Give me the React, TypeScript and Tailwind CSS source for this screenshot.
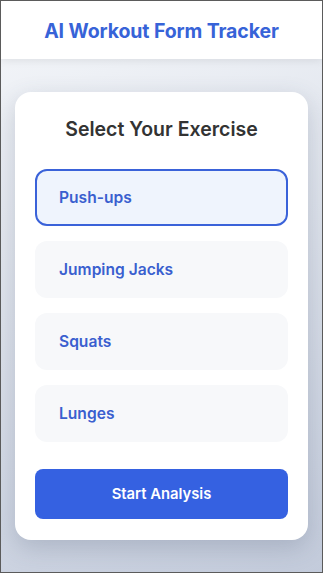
import React, { useState } from "react";

const exercises = ["Push-ups", "Jumping Jacks", "Squats", "Lunges"];

export default function App() {
  const [selected, setSelected] = useState("Push-ups");
  return (
    <div
      className="flex h-[573px] w-full flex-col overflow-hidden border border-[#5b5b5b] bg-[linear-gradient(160deg,#f5f7fa_0%,#c3cbdb_100%)]"
      style={{ fontFamily: "Inter, 'Noto Sans', sans-serif" }}
    >
      <header className="flex h-[58px] shrink-0 items-center justify-center bg-white pt-[4px] shadow-[0_2px_8px_rgba(0,0,0,0.08)]">
        <h1 className="text-[19.5px] font-bold tracking-[-0.1px] text-[#3763d8]">AI Workout Form Tracker</h1>
      </header>
      <main className="flex flex-1 flex-col px-[14px] pt-[33px] pb-[33px]">
        <div className="flex flex-col rounded-[16px] bg-white px-[20px] pt-[23px] pb-[21px] shadow-[0_8px_24px_rgba(60,72,100,0.22)]">
          <h2 className="mb-[26px] text-center text-[19.5px] leading-[28px] font-semibold text-[#333333]">
            Select Your Exercise
          </h2>
          <div className="flex flex-col gap-[15px]">
            {exercises.map((ex) => {
              const active = ex === selected;
              return (
                <button
                  key={ex}
                  onClick={() => setSelected(ex)}
                  className={
                    active
                      ? "flex h-[57px] items-center rounded-[12px] border-2 border-[#3a62d9] bg-[#eff4fd] px-[22px] text-left text-[15.6px] font-semibold text-[#3a5fcf]"
                      : "flex h-[57px] items-center rounded-[12px] border-2 border-transparent bg-[#f7f8fa] px-[22px] text-left text-[15.6px] font-semibold text-[#3a5fcf]"
                  }
                >
                  {ex}
                </button>
              );
            })}
          </div>
          <button className="mt-[27px] h-[50px] rounded-[8px] bg-[#3561e1] text-[14.8px] font-semibold text-white">
            Start Analysis
          </button>
        </div>
      </main>
    </div>
  );
}
